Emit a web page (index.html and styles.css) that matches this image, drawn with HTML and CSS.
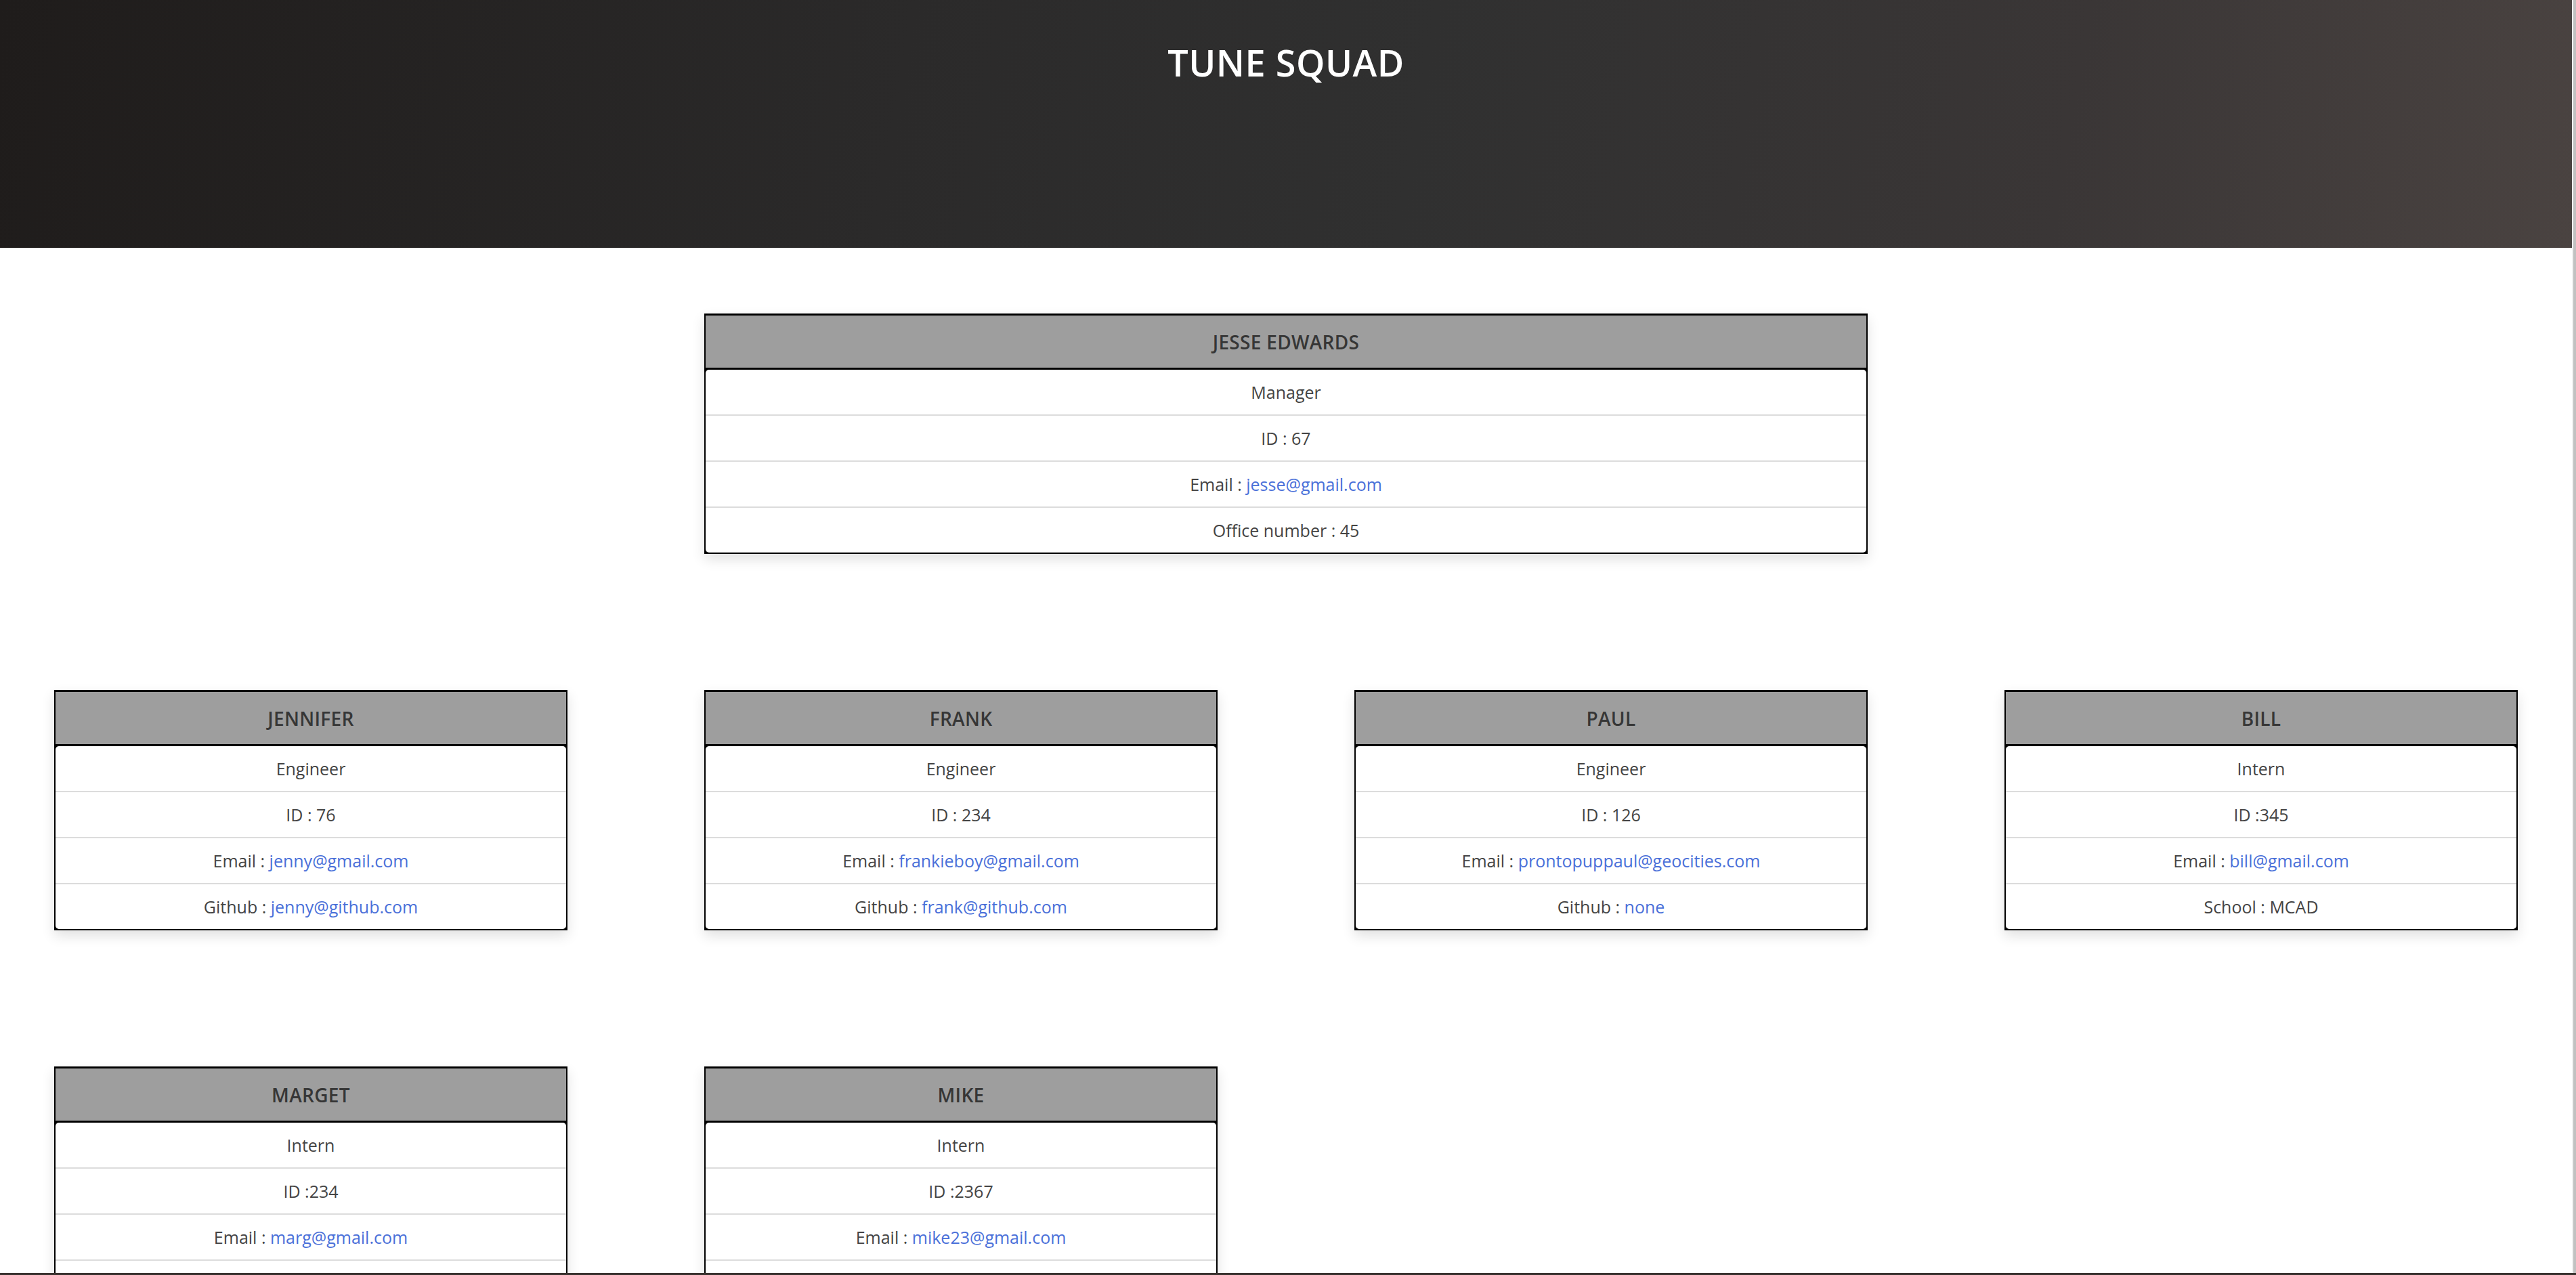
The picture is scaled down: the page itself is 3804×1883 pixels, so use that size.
FILE: index.html
```html
<!DOCTYPE html>
<html lang="en">
<head>
<meta charset="utf-8">
<title>Tune Squad</title>
<link rel="stylesheet" href="styles.css">
</head>
<body>
<div class="page">
  <header class="hero">
    <h1 class="hero-title">TUNE SQUAD</h1>
  </header>
  <main class="team">
    <div class="team-row">
      <section class="card card-manager">
        <h2 class="card-name">JESSE EDWARDS</h2>
        <ul class="card-list">
          <li class="card-row">Manager</li>
          <li class="card-row">ID : 67</li>
          <li class="card-row">Email :&nbsp;<a class="card-link" href="#">jesse@gmail.com</a></li>
          <li class="card-row">Office number : 45</li>
        </ul>
      </section>
    </div>

    <div class="team-row">
      <section class="card">
        <h2 class="card-name">JENNIFER</h2>
        <ul class="card-list">
          <li class="card-row">Engineer</li>
          <li class="card-row">ID : 76</li>
          <li class="card-row">Email :&nbsp;<a class="card-link" href="#">jenny@gmail.com</a></li>
          <li class="card-row">Github :&nbsp;<a class="card-link" href="#">jenny@github.com</a></li>
        </ul>
      </section>

      <section class="card">
        <h2 class="card-name">FRANK</h2>
        <ul class="card-list">
          <li class="card-row">Engineer</li>
          <li class="card-row">ID : 234</li>
          <li class="card-row">Email :&nbsp;<a class="card-link" href="#">frankieboy@gmail.com</a></li>
          <li class="card-row">Github :&nbsp;<a class="card-link" href="#">frank@github.com</a></li>
        </ul>
      </section>

      <section class="card">
        <h2 class="card-name">PAUL</h2>
        <ul class="card-list">
          <li class="card-row">Engineer</li>
          <li class="card-row">ID : 126</li>
          <li class="card-row">Email :&nbsp;<a class="card-link" href="#">prontopuppaul@geocities.com</a></li>
          <li class="card-row">Github :&nbsp;<a class="card-link" href="#">none</a></li>
        </ul>
      </section>

      <section class="card">
        <h2 class="card-name">BILL</h2>
        <ul class="card-list">
          <li class="card-row">Intern</li>
          <li class="card-row">ID :345</li>
          <li class="card-row">Email :&nbsp;<a class="card-link" href="#">bill@gmail.com</a></li>
          <li class="card-row">School : MCAD</li>
        </ul>
      </section>
    </div>

    <div class="team-row">
      <section class="card">
        <h2 class="card-name">MARGET</h2>
        <ul class="card-list">
          <li class="card-row">Intern</li>
          <li class="card-row">ID :234</li>
          <li class="card-row">Email :&nbsp;<a class="card-link" href="#">marg@gmail.com</a></li>
          <li class="card-row">School : UMN</li>
        </ul>
      </section>

      <section class="card">
        <h2 class="card-name">MIKE</h2>
        <ul class="card-list">
          <li class="card-row">Intern</li>
          <li class="card-row">ID :2367</li>
          <li class="card-row">Email :&nbsp;<a class="card-link" href="#">mike23@gmail.com</a></li>
          <li class="card-row">School : UMN</li>
        </ul>
      </section>
    </div>
  </main>
</div>
<div class="scrollbar"></div>
<div class="bottom-edge"></div>
</body>
</html>
```

FILE: styles.css
```css
* {
  box-sizing: border-box;
}

html, body {
  margin: 0;
  padding: 0;
  background: #ffffff;
}

body {
  font-family: "Open Sans", "Noto Sans", sans-serif;
  color: #444444;
}

.page {
  width: calc(100% - 6px);
}

.hero {
  height: 366px;
  background: linear-gradient(100deg, #1f1c1b 0%, #2b2a2a 35%, #303030 55%, #3a3636 80%, #4a4341 100%);
  display: flex;
  justify-content: center;
}

.hero-title {
  margin: 0;
  padding-top: 55px;
  font-family: "Open Sans", sans-serif;
  font-weight: 600;
  font-size: 54px;
  line-height: normal;
  letter-spacing: 0.5px;
  color: #ffffff;
}

.team {
  display: flex;
  flex-direction: column;
  gap: 201px;
  padding: 97px 80px 200px;
}

.team-row {
  display: grid;
  grid-template-columns: repeat(4, 1fr);
  column-gap: 202px;
}

.card {
  background: #000000;
  border-style: solid;
  border-color: #000000;
  border-width: 3px 2px 2px 2px;
  box-shadow: 0 8px 18px rgba(0, 0, 0, 0.12);
}

.card-manager {
  grid-column: 2 / span 2;
}

.card-name {
  margin: 0;
  height: 80px;
  background: #9e9e9e;
  border-bottom: 3px solid #000000;
  display: flex;
  align-items: center;
  justify-content: center;
  font-family: "Open Sans", sans-serif;
  font-weight: 600;
  font-size: 28px;
  letter-spacing: 0.3px;
  color: #363636;
}

.card-list {
  list-style: none;
  margin: 0;
  padding: 0;
  background: #ffffff;
  border-radius: 5px;
  overflow: hidden;
}

.card-row {
  height: 66px;
  display: flex;
  align-items: center;
  justify-content: center;
  font-size: 25px;
  color: #444444;
}

.card-row + .card-row {
  height: 68px;
  border-top: 2px solid #dcdcdc;
}

.card-link {
  color: #4a70d9;
  text-decoration: none;
}

.scrollbar {
  position: fixed;
  top: 0;
  right: 0;
  width: 6px;
  height: 100%;
  background: #c1c1c1;
  border-left: 2px solid #f1f1f1;
}

.bottom-edge {
  position: fixed;
  left: 0;
  bottom: 0;
  width: 100%;
  height: 3px;
  background: #3a3330;
}
```
